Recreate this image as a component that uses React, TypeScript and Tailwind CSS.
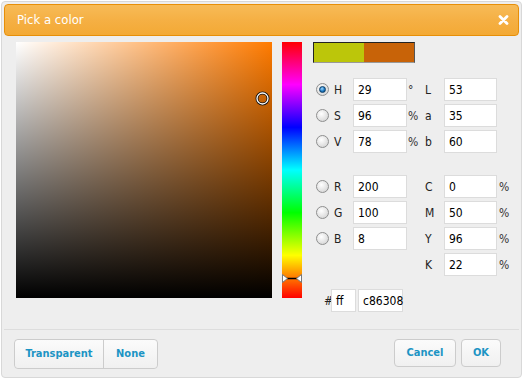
import React from "react";

const font = { fontFamily: '"DejaVu Sans Condensed", "DejaVu Sans", Tahoma, sans-serif' };

const Radio = ({ checked }: { checked?: boolean }) => (
  <span className="ml-[3px] flex h-[13px] w-[13px] items-center justify-center rounded-full border border-[#8e8f8f] bg-[radial-gradient(circle_at_40%_35%,#ffffff,#dcdcdc_70%,#c4c4c4)]">
    {checked && (
      <span className="h-[7px] w-[7px] rounded-full border border-[#0b3d66] bg-[radial-gradient(circle_at_40%_35%,#9fd7ff,#1b78c2_55%,#0a3f6e)]" />
    )}
  </span>
);

const Field = ({ value, w = "w-[54px]" }: { value: string; w?: string }) => (
  <div className={`${w} flex h-[23px] items-center border border-[#dcdcdc] bg-white pl-[4px] text-[12px] text-black`}>
    {value}
  </div>
);

const RadioLabel = ({ label, checked }: { label: string; checked?: boolean }) => (
  <div className="flex items-center">
    <Radio checked={checked} />
    <span className="ml-[5px] text-[12px] text-[#222]">{label}</span>
  </div>
);

const Unit = ({ children }: { children?: React.ReactNode }) => (
  <span className="pl-[1px] text-[12px] text-[#333]">{children}</span>
);

const Lbl = ({ children }: { children: React.ReactNode }) => (
  <span className="text-[12px] text-[#222]">{children}</span>
);

const btn =
  "flex h-[28px] items-center justify-center bg-[linear-gradient(to_bottom,#fbfbfb,#f0f0f0)] text-[11px] font-bold text-[#1c94c4]";

export default function App() {
  return (
    <div className="min-h-screen bg-white p-px" style={font}>
      <div className="flex h-[377px] w-[521px] flex-col rounded-[4px] border border-[#d8d8d8] bg-[#eeeeee] p-[2px]">
        {/* title bar */}
        <div className="flex h-[32px] items-center justify-between rounded-[4px] border border-[#e78f08] bg-[linear-gradient(to_bottom,#f7bb57,#f5b044_50%,#f3a935)] pl-[12px] pr-[9px]">
          <span className="text-[13px] text-white">Pick a color</span>
          <svg width="11" height="10" viewBox="0 0 11 10">
            <path d="M2 1.5 L9 8.5 M9 1.5 L2 8.5" stroke="#fff" strokeWidth="2.8" strokeLinecap="round" />
          </svg>
        </div>

        {/* body */}
        <div className="flex h-[293px] pt-[6px] pl-[12px]">
          {/* saturation / value map */}
          <div className="relative h-[256px] w-[256px] bg-[linear-gradient(to_bottom,rgba(0,0,0,0),#000),linear-gradient(to_right,#fff,#ff7b00)]">
            <svg className="absolute left-[239px] top-[49px]" width="15" height="15" viewBox="0 0 15 15">
              <circle cx="7.5" cy="7.5" r="5.5" fill="none" stroke="#111" strokeWidth="3" />
              <circle cx="7.5" cy="7.5" r="5.5" fill="none" stroke="#fff" strokeWidth="1.3" />
            </svg>
          </div>

          {/* hue bar */}
          <div className="relative ml-[10px] h-[256px] w-[20px] bg-[linear-gradient(to_bottom,#f00,#f0f,#00f,#0ff,#0f0,#ff0,#f00)]">
            <svg className="absolute left-0 top-[232px]" width="20" height="9" viewBox="0 0 20 9">
              <line x1="4" y1="4.5" x2="16" y2="4.5" stroke="#000" strokeWidth="1.5" />
              <path d="M0.5 0.5 L5.5 4.5 L0.5 8.5 Z" fill="#fff" stroke="#777" />
              <path d="M19.5 0.5 L14.5 4.5 L19.5 8.5 Z" fill="#fff" stroke="#777" />
            </svg>
          </div>

          {/* controls */}
          <div className="ml-[11px] flex flex-col">
            <div className="flex h-[21px] w-[102px] border border-[#222] border-b-[#999] border-r-[#555]">
              <div className="flex-1 bg-[#bcc60a]" />
              <div className="flex-1 bg-[#c86308]" />
            </div>

            <div className="mt-[15px] grid grid-cols-[40px_54px_18px_19px_53px_20px] items-center gap-y-[3px]">
              <RadioLabel label="H" checked />
              <Field value="29" />
              <Unit>°</Unit>
              <Lbl>L</Lbl>
              <Field value="53" w="w-[53px]" />
              <span />

              <RadioLabel label="S" />
              <Field value="96" />
              <Unit>%</Unit>
              <Lbl>a</Lbl>
              <Field value="35" w="w-[53px]" />
              <span />

              <RadioLabel label="V" />
              <Field value="78" />
              <Unit>%</Unit>
              <Lbl>b</Lbl>
              <Field value="60" w="w-[53px]" />
              <span />
            </div>

            <div className="mt-[22px] grid grid-cols-[40px_54px_18px_19px_53px_20px] items-center gap-y-[3px]">
              <RadioLabel label="R" />
              <Field value="200" />
              <span />
              <Lbl>C</Lbl>
              <Field value="0" w="w-[53px]" />
              <span className="pl-[2px] text-[12px] text-[#333]">%</span>

              <RadioLabel label="G" />
              <Field value="100" />
              <span />
              <Lbl>M</Lbl>
              <Field value="50" w="w-[53px]" />
              <span className="pl-[2px] text-[12px] text-[#333]">%</span>

              <RadioLabel label="B" />
              <Field value="8" />
              <span />
              <Lbl>Y</Lbl>
              <Field value="96" w="w-[53px]" />
              <span className="pl-[2px] text-[12px] text-[#333]">%</span>

              <span />
              <span />
              <span />
              <Lbl>K</Lbl>
              <Field value="22" w="w-[53px]" />
              <span className="pl-[2px] text-[12px] text-[#333]">%</span>
            </div>

            <div className="mt-[13px] ml-[11px] flex items-center">
              <span className="w-[7px] text-[12px] text-[#222]">#</span>
              <Field value="ff" w="w-[25px]" />
              <div className="ml-[2px]">
                <Field value="c86308" w="w-[45px]" />
              </div>
            </div>
          </div>
        </div>

        {/* footer */}
        <div className="flex justify-between border-t border-[#dddddd] pt-[9px] pl-[10px] pr-[18px]">
          <div className="flex rounded-[4px] border border-[#cccccc]">
            <div className={`${btn} w-[89px] rounded-l-[4px] border-r border-[#cccccc]`}>Transparent</div>
            <div className={`${btn} w-[53px] rounded-r-[4px]`}>None</div>
          </div>
          <div className="flex gap-[5px]">
            <div className={`${btn} w-[62px] rounded-[4px] border border-[#cccccc]`}>Cancel</div>
            <div className={`${btn} w-[40px] rounded-[4px] border border-[#cccccc]`}>OK</div>
          </div>
        </div>
      </div>
    </div>
  );
}
